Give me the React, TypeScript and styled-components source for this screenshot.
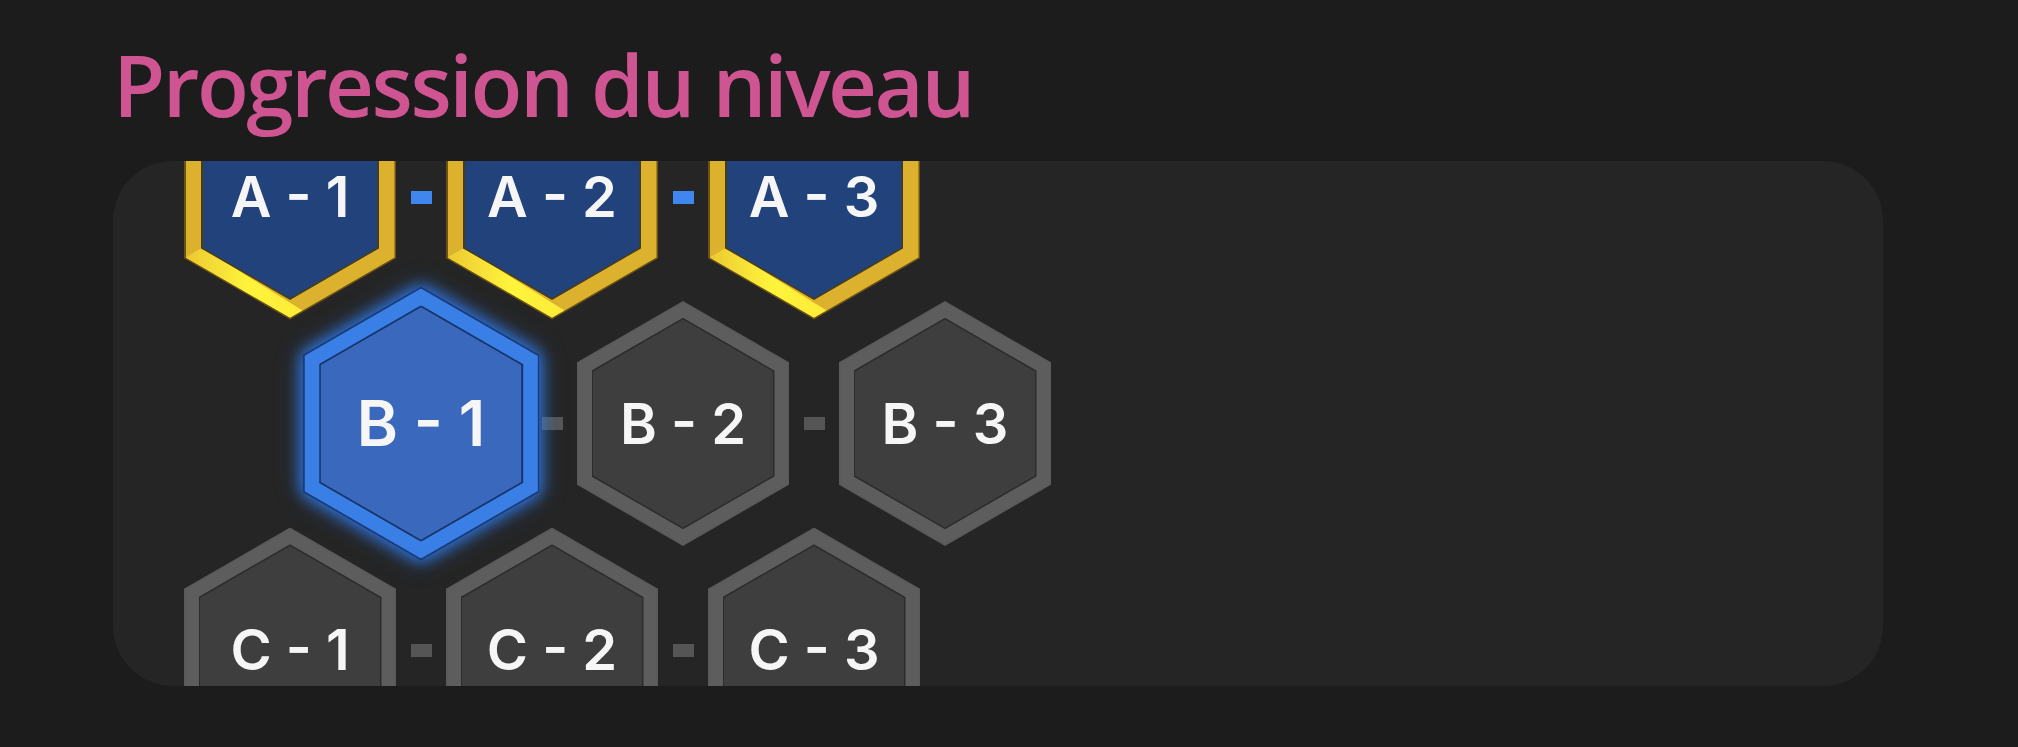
import type { FC } from "react";
import styled, { createGlobalStyle } from "styled-components";

const GlobalStyle = createGlobalStyle`
  html, body {
    margin: 0;
    background: #1c1c1c;
  }
  body {
    font-family: "Open Sans", "Noto Sans", sans-serif;
  }
`;

type Status = "done" | "current" | "locked";

const HEX = "polygon(50% 0, 100% 25%, 100% 75%, 50% 100%, 0 75%, 0 25%)";
const TILE_W = 212;
const TILE_H = 245;
const GAP = 50;

const palette: Record<
  Status,
  { rim: string; band: string; width: number; line: string; fill: string; link: string }
> = {
  done: {
    rim: "#6a5214",
    band: "#dcb12d",
    width: 15.5,
    line: "#4a3d16",
    fill: "#22427c",
    link: "#3f86ee",
  },
  current: {
    rim: "#1a3b78",
    band: "#3a7fe6",
    width: 13,
    line: "#17346a",
    fill: "#3968bc",
    link: "#555555",
  },
  locked: {
    rim: "#5a5a5a",
    band: "#5d5d5d",
    width: 13,
    line: "#2c2c2c",
    fill: "#3e3e3e",
    link: "#555555",
  },
};

const Page = styled.div`
  padding: 42px 0 0 113px;
`;

const Title = styled.h2`
  margin: 0 0 34px;
  font-family: "Open Sans", "Noto Sans", sans-serif;
  font-weight: 600;
  font-size: 85px;
  line-height: 1;
  letter-spacing: -2.5px;
  color: #cf5592;
`;

const Panel = styled.div`
  width: 1770px;
  height: 525px;
  box-sizing: border-box;
  padding-left: 71px;
  background: #252525;
  border-radius: 60px;
  overflow: hidden;
  display: flex;
  flex-direction: column;
  justify-content: center;
`;

const Row = styled.div<{ $shift: boolean }>`
  flex-shrink: 0;
  display: flex;
  align-items: center;
  margin-left: ${(p) => (p.$shift ? (TILE_W + GAP) / 2 : 0)}px;
  & + & {
    margin-top: -18.5px;
  }
`;

const Tile = styled.div<{ $status: Status }>`
  position: relative;
  flex-shrink: 0;
  width: ${TILE_W}px;
  height: ${TILE_H}px;
  display: flex;
  z-index: ${(p) => (p.$status === "current" ? 2 : 1)};
  ${(p) =>
    p.$status === "current" &&
    `
    transform: scale(1.118);
    filter: drop-shadow(0 0 7px rgba(47, 125, 240, 0.95)) drop-shadow(0 0 8px rgba(47, 125, 240, 0.55));
  `}
`;

// one hexagonal ring; nested layers inset by `$inset` keep the shape regular
const Layer = styled.div<{ $bg: string; $inset: number }>`
  position: relative;
  flex: 1;
  box-sizing: border-box;
  display: flex;
  padding: ${(p) => p.$inset * 1.1547}px ${(p) => p.$inset}px;
  clip-path: ${HEX};
  background: ${(p) => p.$bg};
`;

// brighter lower-left edge on the gold frame
const Shine = styled.div`
  position: absolute;
  inset: 0;
  clip-path: polygon(0 75%, 50% 100%, 56% 97%, 8% 71%);
  background: linear-gradient(
    to right,
    #ecc932 0%,
    #fff43c 30%,
    #fbe936 62%,
    rgba(230, 190, 45, 0) 100%
  );
`;

const Label = styled.span`
  margin: auto;
  font-family: Inter, "DejaVu Sans", sans-serif;
  font-weight: 600;
  font-size: 56px;
  line-height: 1;
  color: #f6f6f6;
  white-space: nowrap;
`;

const Link = styled.div<{ $color: string }>`
  flex-shrink: 0;
  width: 21px;
  height: 13px;
  margin: 0 ${(GAP - 21) / 2}px;
  background: ${(p) => p.$color};
`;

interface HexProps {
  label: string;
  status: Status;
}

const Hex: FC<HexProps> = ({ label, status }) => {
  const c = palette[status];
  return (
    <Tile $status={status}>
      <Layer $bg={c.rim} $inset={1.5}>
        <Layer $bg={c.band} $inset={c.width}>
          {status === "done" && <Shine />}
          <Layer $bg={c.line} $inset={1.5}>
            <Layer $bg={c.fill} $inset={0}>
              <Label>{label}</Label>
            </Layer>
          </Layer>
        </Layer>
      </Layer>
    </Tile>
  );
};

const levels: { row: string; shift: boolean; status: Status[] }[] = [
  { row: "A", shift: false, status: ["done", "done", "done"] },
  { row: "B", shift: true, status: ["current", "locked", "locked"] },
  { row: "C", shift: false, status: ["locked", "locked", "locked"] },
];

const App: FC = () => {
  return (
    <Page>
      <GlobalStyle />
      <Title>Progression du niveau</Title>
      <Panel>
        {levels.map((lvl) => (
          <Row key={lvl.row} $shift={lvl.shift}>
            {lvl.status.map((st, i) => {
              const linkColor =
                i > 0 && lvl.status[i - 1] === "done" && st === "done"
                  ? palette.done.link
                  : palette.locked.link;
              return [
                i > 0 && <Link key={`l${i}`} $color={linkColor} />,
                <Hex key={i} label={`${lvl.row} - ${i + 1}`} status={st} />,
              ];
            })}
          </Row>
        ))}
      </Panel>
    </Page>
  );
};

export default App;
